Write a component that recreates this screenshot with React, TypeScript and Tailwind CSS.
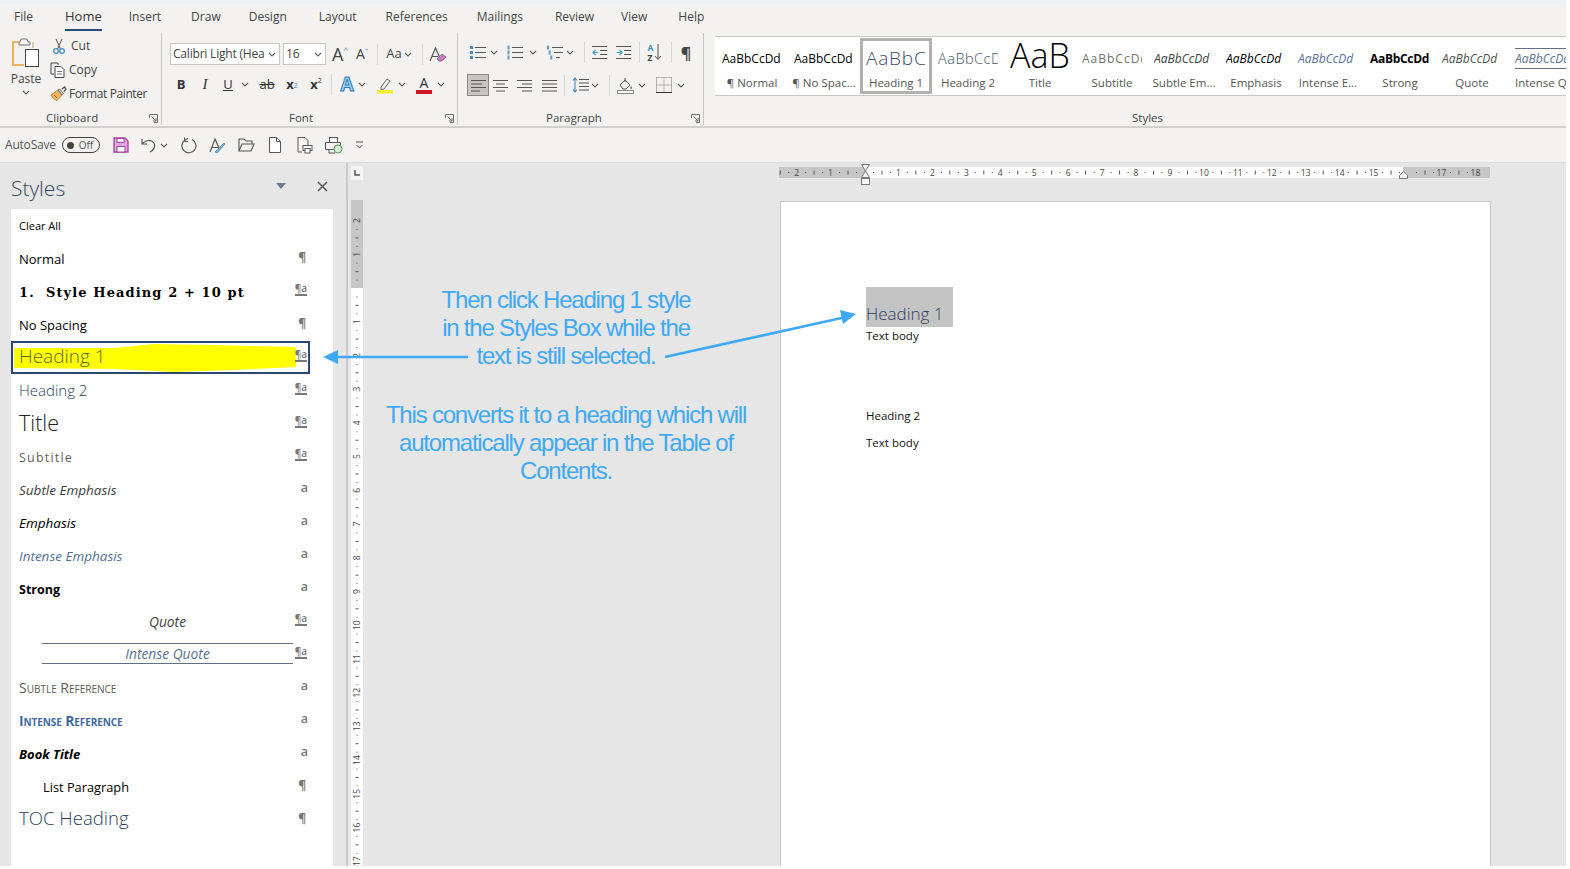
import type { ReactNode } from "react";

const ui = "font-['Open_Sans','Noto_Sans',sans-serif]";
const grayIcon = "#605e5c";
const blue = "#3fa9f5";

const tabs = [
  { label: "Insert", cls: "ml-[27px]" },
  { label: "Draw", cls: "ml-[30px]" },
  { label: "Design", cls: "ml-[28px]" },
  { label: "Layout", cls: "ml-[32px]" },
  { label: "References", cls: "ml-[29px]" },
  { label: "Mailings", cls: "ml-[29px]" },
  { label: "Review", cls: "ml-[32px]" },
  { label: "View", cls: "ml-[27px]" },
  { label: "Help", cls: "ml-[31px]" },
];

function Chevron({ className = "" }: { className?: string }) {
  return (
    <svg width="8" height="5" viewBox="0 0 8 5" className={className}>
      <path d="M1 1l3 3 3-3" fill="none" stroke={grayIcon} strokeWidth="1.1" />
    </svg>
  );
}

function Cell({ className = "", children }: { className?: string; children?: ReactNode }) {
  return <div className={"flex h-[21px] shrink-0 items-center justify-center " + className}>{children}</div>;
}

function Sep({ className = "" }: { className?: string }) {
  return <div className={"h-[21px] w-px shrink-0 bg-[#d8d6d4] " + className} />;
}

function Launcher({ className = "" }: { className?: string }) {
  return (
    <svg width="9" height="9" viewBox="0 0 9 9" className={"absolute top-[81px] " + className}>
      <path d="M.5 4V.5H8.500V8.500H5M2.500 2.500L7 7M7 4V7H4" fill="none" stroke="#707070" strokeWidth="1" />
    </svg>
  );
}

function Lines({ rows, w = 15, x = 0 }: { rows: [number, number][]; w?: number; x?: number }) {
  return (
    <>
      {rows.map(([from, to], i) => (
        <path key={i} d={`M${x + from} ${2.500 + i * 3.500}H${x + Math.min(to, w)}`} stroke="#555" strokeWidth="1" />
      ))}
    </>
  );
}

function Align({ rows }: { rows: [number, number][] }) {
  return (
    <svg width="15" height="15" viewBox="0 0 15 15">
      <Lines rows={rows} />
    </svg>
  );
}

function ListIcon({ kind }: { kind: "bullet" | "number" | "multi" }) {
  return (
    <svg width="17" height="15" viewBox="0 0 17 15">
      {[2, 7, 12].map((y, i) => (
        <path key={y} d={`M${kind === "multi" ? 6 + i * 2 : 6} ${y + 0.500}H${kind === "multi" && i === 2 ? 14 : 17}`} stroke="#555" strokeWidth="1" />
      ))}
      {kind === "bullet" &&
        [0, 5, 10].map((y) => <rect key={y} x="1" y={y + 1} width="3" height="3" fill="#4a8fb8" />)}
      {kind !== "bullet" &&
        [0, 5, 10].map((y) => (
          <rect key={y} x={kind === "multi" ? 1 + y / 3 : 1.500} y={y + 0.500} width="2" height="4" fill="#6a9ab8" />
        ))}
    </svg>
  );
}

function PasteIcon() {
  return (
    <svg width="30" height="32" viewBox="0 0 30 32">
      <path d="M8 5H2v23h11" fill="none" stroke="#e8b55a" strokeWidth="2" />
      <path d="M8 5h1l1-3h6l1 3h2v3H8z" fill="#f5f4f3" stroke="#777" strokeWidth="1" />
      <path d="M22 5v6" stroke="#b8a070" strokeWidth="1" />
      <rect x="14.500" y="12.500" width="13" height="17" fill="#fff" stroke="#444" strokeWidth="1" />
    </svg>
  );
}

function CutIcon() {
  return (
    <svg width="14" height="16" viewBox="0 0 14 16">
      <path d="M4 1l4.500 10M10 1L5.500 11" stroke="#666" strokeWidth="1.100" fill="none" />
      <circle cx="4" cy="13" r="2.300" fill="none" stroke="#3f8fb5" strokeWidth="1.300" />
      <circle cx="10" cy="13" r="2.300" fill="none" stroke="#3f8fb5" strokeWidth="1.300" />
    </svg>
  );
}

function CopyIcon() {
  return (
    <svg width="16" height="16" viewBox="0 0 16 16">
      <path d="M6 1H1v11h3" fill="none" stroke="#444" strokeWidth="1" />
      <path d="M6 1h2v2M5 4.500h6l3 3v8H5z" fill="#fff" stroke="#444" strokeWidth="1" />
      <path d="M7 9.500h5M7 12h5" stroke="#777" strokeWidth="1" />
    </svg>
  );
}

function PainterIcon() {
  return (
    <svg width="17" height="16" viewBox="0 0 17 16">
      <path d="M1 9l7-5 4 5-5 5.500C5 14 2.500 12 1 9z" fill="#eeb45f" stroke="#c98a35" strokeWidth="1" />
      <path d="M8 4l4 5 1.500-1.500-4-4.500z" fill="#dcdcdc" stroke="#666" strokeWidth="1" />
      <path d="M12 3l2.500-2 1.500 2-2 2.500" fill="none" stroke="#555" strokeWidth="1.300" />
      <path d="M4 9l3 3" stroke="#a86f28" strokeWidth="1" />
    </svg>
  );
}

function TextA({ color, size = "text-[15px]" }: { color?: string; size?: string }) {
  return <span className={size + " leading-none"} style={color ? { color } : undefined}>A</span>;
}

function Ribbon() {
  return (
    <div className={"flex h-[96px] shrink-0 text-[#444] " + ui}>
      {/* clipboard */}
      <div className="relative mt-[3px] flex h-[92px] w-[162px] shrink-0 border-r border-[#c8c6c4]">
        <div className="flex w-[50px] flex-col items-center pl-[2px] pt-[4px]">
          <PasteIcon />
          <span className="mt-[2px] text-[12px] leading-[16px]">Paste</span>
          <Chevron className="mt-[3px]" />
        </div>
        <div className="flex flex-col pt-px text-[12px]">
          <div className="flex h-[24px] items-center gap-[5px] pl-[2px]"><CutIcon />Cut</div>
          <div className="flex h-[24px] items-center gap-[3px]"><CopyIcon />Copy</div>
          <div className="flex h-[24px] items-center gap-[2px]"><PainterIcon /><span className="tracking-[-0.4px]">Format Painter</span></div>
        </div>
        <span className="absolute left-[46px] top-[77px] text-[11.500px] leading-[16px]">Clipboard</span>
        <Launcher className="left-[149px]" />
      </div>

      {/* font */}
      <div className="relative mt-[3px] flex h-[92px] w-[296px] shrink-0 flex-col border-r border-[#c8c6c4] pl-[8px] pt-[10px]">
        <div className="flex items-center">
          <div className="flex h-[22px] w-[110px] shrink-0 items-center justify-between whitespace-nowrap border border-[#c8c6c4] bg-white pl-[2px] pr-[3px] text-[12px] tracking-[-0.2px]">
            Calibri Light (Hea<Chevron />
          </div>
          <div className="ml-[3px] flex h-[22px] w-[43px] shrink-0 items-center justify-between border border-[#c8c6c4] bg-white pl-[2px] pr-[3px] text-[12px]">
            16<Chevron />
          </div>
          <Cell className="ml-[3px] w-[22px]"><TextA size="text-[18px]" /><span className="-mt-[8px] text-[8px] text-[#4a8fb8]">^</span></Cell>
          <Cell className="w-[22px]"><TextA size="text-[14px]" /><span className="-mt-[7px] text-[8px] text-[#4a8fb8]">ˇ</span></Cell>
          <Sep className="ml-[4px]" />
          <Cell className="ml-[7px] w-[28px] gap-[2px] text-[13px]">Aa<Chevron /></Cell>
          <Sep className="ml-[9px]" />
          <Cell className="ml-[5px] w-[20px]">
            <svg width="18" height="17" viewBox="0 0 18 17">
              <path d="M1 15L6.500 2l4 9M3 10.500h6" fill="none" stroke="#555" strokeWidth="1.200" />
              <path d="M10 15l-2-2 5-5 4 3-4 4z" fill="#c77bbd" stroke="#8d5a88" strokeWidth=".8" />
            </svg>
          </Cell>
        </div>
        <div className="mt-[9px] flex items-center text-[#333]">
          <Cell className="w-[22px] text-[13px] font-bold">B</Cell>
          <Cell className="ml-[2px] w-[22px] font-['Liberation_Serif',serif] text-[15px] italic">I</Cell>
          <Cell className="ml-[2px] w-[20px] text-[13px] underline">U</Cell>
          <Cell className="ml-[2px] w-[10px]"><Chevron /></Cell>
          <Cell className="ml-[7px] w-[20px] text-[13px] line-through">ab</Cell>
          <Cell className="ml-[5px] w-[20px] text-[13px] font-bold">x<sub className="text-[7px] font-normal text-[#4a8fb8]">2</sub></Cell>
          <Cell className="ml-[4px] w-[20px] text-[13px] font-bold">x<sup className="text-[7px] font-normal">2</sup></Cell>
          <Sep className="ml-[5px]" />
          <Cell className="ml-[6px] w-[18px]">
            <span className="text-[19px] font-bold leading-none text-[#9fd3f0] [-webkit-text-stroke:1px_#2b7cb5]">A</span>
          </Cell>
          <Cell className="ml-px w-[10px]"><Chevron /></Cell>
          <Cell className="ml-[9px] w-[18px]">
            <svg width="18" height="18" viewBox="0 0 18 18">
              <path d="M5 11l6-8 3 2-6 8-3 .5z" fill="none" stroke="#666" strokeWidth="1" />
              <rect x="1" y="14" width="16" height="3.500" fill="#f8ee2e" />
            </svg>
          </Cell>
          <Cell className="ml-[3px] w-[10px]"><Chevron /></Cell>
          <Cell className="ml-[8px] w-[18px] flex-col">
            <span className="text-[14px] leading-[14px]">A</span>
            <span className="h-[4px] w-[16px] bg-[#d2141c]" />
          </Cell>
          <Cell className="ml-[3px] w-[10px]"><Chevron /></Cell>
        </div>
        <span className="absolute left-[127px] top-[77px] text-[11.500px] leading-[16px]">Font</span>
        <Launcher className="left-[283px]" />
      </div>

      {/* paragraph */}
      <div className="relative mt-[3px] flex h-[92px] w-[246px] shrink-0 flex-col border-r border-[#c8c6c4] pl-[8px] pt-[9px]">
        <div className="flex items-center">
          <Cell className="ml-[3px] w-[17px]"><ListIcon kind="bullet" /></Cell>
          <Cell className="ml-[3px] w-[10px]"><Chevron /></Cell>
          <Cell className="ml-[7px] w-[17px]"><ListIcon kind="number" /></Cell>
          <Cell className="ml-[5px] w-[10px]"><Chevron /></Cell>
          <Cell className="ml-[8px] w-[17px]"><ListIcon kind="multi" /></Cell>
          <Cell className="ml-[2px] w-[10px]"><Chevron /></Cell>
          <Sep className="ml-[9px]" />
          <Cell className="ml-[7px] w-[16px]">
            <svg width="16" height="15" viewBox="0 0 16 15">
              <path d="M0 1.500H15M8 5.500H15M8 9.500H15M0 13.500H15" stroke="#555" />
              <path d="M6 7.500H1M3.500 5L1 7.500 3.500 10" fill="none" stroke="#3f9bc7" strokeWidth="1.200" />
            </svg>
          </Cell>
          <Cell className="ml-[8px] w-[16px]">
            <svg width="16" height="15" viewBox="0 0 16 15">
              <path d="M0 1.500H15M8 5.500H15M8 9.500H15M0 13.500H15" stroke="#555" />
              <path d="M1 7.500H6M3.500 5L6 7.500 3.500 10" fill="none" stroke="#3f9bc7" strokeWidth="1.200" />
            </svg>
          </Cell>
          <Sep className="ml-[7px]" />
          <Cell className="ml-[5px] w-[20px] gap-[1px]">
            <span className="flex flex-col gap-px text-[8.500px] font-bold leading-[9px]"><span className="text-[#3f8fb5]">A</span><span>Z</span></span>
            <svg width="8" height="17" viewBox="0 0 8 17"><path d="M4 0V15M1 12l3 3.500L7 12" fill="none" stroke="#555" /></svg>
          </Cell>
          <Sep className="ml-[6px]" />
          <Cell className="ml-[4px] w-[20px] text-[16px] font-bold text-[#444]">¶</Cell>
        </div>
        <div className="mt-[11px] flex items-center">
          <Cell className="ml-px h-[22px] w-[22px] border border-[#8a8886] bg-[#c8c6c4]"><Align rows={[[0, 15], [0, 11], [0, 15], [0, 9]]} /></Cell>
          <Cell className="ml-px w-[21px]"><Align rows={[[0, 15], [3, 12], [0, 15], [3, 12]]} /></Cell>
          <Cell className="ml-[3px] w-[21px]"><Align rows={[[0, 15], [5, 15], [0, 15], [5, 15]]} /></Cell>
          <Cell className="ml-[4px] w-[21px]"><Align rows={[[0, 15], [0, 15], [0, 15], [0, 15]]} /></Cell>
          <Sep className="ml-[4px]" />
          <Cell className="ml-[7px] w-[17px]">
            <svg width="17" height="16" viewBox="0 0 17 16">
              <path d="M3 1V15M1 3.500L3 1l2 2.500M1 12.500L3 15l2-2.500" fill="none" stroke="#3f8fb5" strokeWidth="1.100" />
              <path d="M7 2.500H17M7 6H17M7 9.500H17M7 13H17" stroke="#555" />
            </svg>
          </Cell>
          <Cell className="ml-px w-[10px]"><Chevron /></Cell>
          <Sep className="ml-[9px]" />
          <Cell className="ml-[7px] w-[17px]">
            <svg width="17" height="17" viewBox="0 0 17 17">
              <path d="M3 8l5-5 5 5-4 4H6z" fill="none" stroke="#555" strokeWidth="1" />
              <path d="M8 1v4" stroke="#555" />
              <path d="M14 9c1 1.500 1.500 2.500 0 3-1-.5-.8-1.500 0-3z" fill="#555" />
              <rect x=".5" y="13.500" width="16" height="3" fill="#fff" stroke="#888" />
            </svg>
          </Cell>
          <Cell className="ml-[3px] w-[10px]"><Chevron /></Cell>
          <Cell className="ml-[8px] w-[17px]">
            <svg width="16" height="16" viewBox="0 0 16 16">
              <path d="M.5.5H15.500M.5 8H15.500M8 .5V15.500M.5.5V15.500M15.500.5V15.500" fill="none" stroke="#777" strokeDasharray="1 1" />
              <path d="M0 15.500H16" stroke="#333" />
            </svg>
          </Cell>
          <Cell className="ml-[4px] w-[10px]"><Chevron /></Cell>
        </div>
        <span className="absolute left-[88px] top-[77px] text-[11.500px] leading-[16px]">Paragraph</span>
        <Launcher className="left-[233px]" />
      </div>

      <StyleGallery />
    </div>
  );
}

const gallery: { preview: string; label: string; cls: string }[] = [
  { preview: "AaBbCcDd", label: "¶ Normal", cls: "text-[12px] text-black" },
  { preview: "AaBbCcDd", label: "¶ No Spac...", cls: "text-[12px] text-black" },
  { preview: "AaBbCc", label: "Heading 1", cls: "text-[19px] font-light tracking-[0.8px] text-[#3b4c66]" },
  { preview: "AaBbCcDd", label: "Heading 2", cls: "text-[14.500px] font-light tracking-[0.5px] text-[#44546a]" },
  { preview: "AaB", label: "Title", cls: "-mt-[8px] block text-[34px] font-light leading-none text-black" },
  { preview: "AaBbCcDd", label: "Subtitle", cls: "text-[12px] tracking-[1px] text-[#707070]" },
  { preview: "AaBbCcDd", label: "Subtle Em...", cls: "text-[12px] italic text-[#404040]" },
  { preview: "AaBbCcDd", label: "Emphasis", cls: "text-[12px] italic text-black" },
  { preview: "AaBbCcDd", label: "Intense E...", cls: "text-[12px] italic text-[#5a7398]" },
  { preview: "AaBbCcDd", label: "Strong", cls: "text-[12px] font-bold tracking-[-0.3px] text-black" },
  { preview: "AaBbCcDd", label: "Quote", cls: "text-[12px] italic text-[#505050]" },
];

function StyleGallery() {
  return (
    <div className="relative ml-[11px] mt-[6px] h-[90px] flex-1">
      <div className="flex h-[60px] overflow-hidden border-y border-[#c8c6c4] bg-white pl-px">
        {gallery.map((g) => (
          <div key={g.label} className="relative flex h-full w-[72px] shrink-0 flex-col px-[6px]">
            <div className="mt-[4px] flex h-[29px] w-[60px] items-center overflow-hidden whitespace-nowrap pt-[6px]">
              <span className={g.cls}>{g.preview}</span>
            </div>
            <span className="mt-[5px] self-center whitespace-nowrap text-[11.500px] leading-[16px] text-[#555]">{g.label}</span>
            {g.label === "Heading 1" && <span className="absolute inset-x-0 inset-y-px border-[3px] border-[#b3b1af]" />}
          </div>
        ))}
        <div className="flex h-full w-[62px] shrink-0 flex-col items-start overflow-hidden pl-[7px]">
          <div className="mt-[11px] flex h-[21px] w-[52px] items-center overflow-hidden whitespace-nowrap border-y border-[#5f6f87] text-[12px] italic text-[#5a7398]">AaBbCcDd</div>
          <span className="mt-[6px] whitespace-nowrap text-[11.500px] leading-[16px] text-[#555]">Intense Q.</span>
        </div>
      </div>
      <span className="absolute left-[417px] top-[74px] text-[11.500px] leading-[16px] text-[#444]">Styles</span>
    </div>
  );
}

function QuickAccess() {
  return (
    <div className={"flex h-[36px] shrink-0 items-center border-t-2 border-[#d2d0ce] text-[#555] " + ui}>
      <span className="ml-[5px] text-[12px] tracking-[-0.2px]">AutoSave</span>
      <div className="ml-[6px] flex h-[16px] w-[38px] items-center rounded-full border border-[#444] pl-[4px] text-[10px]">
        <span className="h-[7px] w-[7px] rounded-full bg-[#444]" />
        <span className="ml-[5px]">Off</span>
      </div>
      <svg width="16" height="16" viewBox="0 0 16 16" className="ml-[13px]">
        <path d="M1 1h11l3 3v11H1z" fill="#e9a6e6" stroke="#a0459c" strokeWidth="1.300" />
        <rect x="4" y="1.500" width="7" height="4" fill="#fff" stroke="#a0459c" />
        <rect x="4" y="9.500" width="8" height="5.500" fill="#fff" stroke="#a0459c" />
      </svg>
      <svg width="16" height="16" viewBox="0 0 16 16" className="ml-[12px]">
        <path d="M1 2v5h5M1 7c3-4 9-5 12-1 2 3 0 7-4 9" fill="none" stroke="#555" strokeWidth="1.200" />
      </svg>
      <Chevron className="ml-[3px]" />
      <svg width="17" height="17" viewBox="0 0 17 17" className="ml-[12px]">
        <path d="M8 1.500l-3 1.500M5 3a7 7 0 1 0 7-.5" fill="none" stroke="#555" strokeWidth="1.200" />
        <path d="M4.500 .5v4h3.500" fill="none" stroke="#555" strokeWidth="1" />
      </svg>
      <svg width="17" height="17" viewBox="0 0 17 17" className="ml-[12px]">
        <path d="M1 15L6 2l4 9M3 10.500h6" fill="none" stroke="#555" strokeWidth="1.200" />
        <path d="M6 15l9-9 1 1-8 9z" fill="#7fb2d8" stroke="#4a7ea8" strokeWidth=".8" />
      </svg>
      <svg width="17" height="14" viewBox="0 0 17 14" className="ml-[12px]">
        <path d="M1 13V1h5l2 2h6v3M1 13l3-7h12l-3 7z" fill="none" stroke="#555" strokeWidth="1.100" />
      </svg>
      <svg width="12" height="16" viewBox="0 0 12 16" className="ml-[14px]">
        <path d="M.5.5h7l4 4v11H.5zM7.500.5v4h4" fill="#fff" stroke="#555" />
      </svg>
      <svg width="16" height="17" viewBox="0 0 16 17" className="ml-[16px]">
        <path d="M1 .5h7l3 3V8M1 .5V15h4" fill="none" stroke="#555" />
        <rect x="6" y="8.500" width="9" height="5" fill="#fff" stroke="#555" />
        <rect x="8" y="11.500" width="5" height="4.500" fill="#fff" stroke="#555" />
      </svg>
      <svg width="18" height="17" viewBox="0 0 18 17" className="ml-[12px]">
        <rect x="4.500" y=".5" width="8" height="5" fill="#fff" stroke="#555" />
        <path d="M.5 5.500h15v7H.5zM4 12.500V16h6" fill="none" stroke="#555" />
        <circle cx="13" cy="12" r="4" fill="#d4ecd4" stroke="#5a9a5a" />
      </svg>
      <svg width="9" height="9" viewBox="0 0 9 9" className="ml-[12px]">
        <path d="M1 1h7M1.500 4l3 3 3-3" fill="none" stroke="#555" />
      </svg>
    </div>
  );
}

function HorizontalRuler() {
  const zero = 85.5;
  const cm = 33.94;
  const marks: number[] = [];
  for (let i = -3; i <= 18; i++) marks.push(i);
  return (
    <svg width="712" height="23" viewBox="0 0 712 23" className="ml-[415px] block shrink-0">
      <rect x="0" y="4" width="711" height="11" fill="#c6c6c6" />
      <rect x="86" y="4" width="538" height="11" fill="#fff" />
      {marks.map((n) => {
        const x = zero + n * cm;
        return (
          <g key={n}>
            {n !== 0 && n !== 16 && n !== -3 && (
              <text x={x} y="12.500" fontSize="8.500" textAnchor="middle" fill="#444" fontFamily="Open Sans">
                {Math.abs(n)}
              </text>
            )}
            {n < 18 && (
              <>
                {x + cm * 0.25 > 0 && <rect x={x + cm * 0.25} y="9" width="1" height="1" fill="#555" />}
                {x + cm * 0.5 > 0 && <rect x={x + cm * 0.5} y="7.500" width="1" height="4" fill="#555" />}
                <rect x={x + cm * 0.75} y="9" width="1" height="1" fill="#555" />
              </>
            )}
          </g>
        );
      })}
      <path d="M82.500 1.500h8l-4 6.500 4 6.500h-8l4-6.500z" fill="#f5f5f5" stroke="#777" />
      <rect x="82.500" y="15.500" width="8" height="6" fill="#f5f5f5" stroke="#777" />
      <path d="M620.500 15.500v-3l4-4 4 4v3z" fill="#f5f5f5" stroke="#777" />
    </svg>
  );
}

function VerticalRuler() {
  const zero = 88;
  const cm = 33.72;
  const marks: number[] = [];
  for (let i = -2; i <= 17; i++) marks.push(i);
  return (
    <svg width="12" height="665" viewBox="0 0 12 665" className="mt-[20px] block">
      <rect x="0" y="0" width="12" height="88" fill="#c6c6c6" />
      <rect x="0" y="88" width="12" height="577" fill="#fff" />
      {marks.map((n) => {
        const y = zero + n * cm;
        return (
          <g key={n}>
            {n !== 0 && (
              <text
                x="6"
                y={y}
                fontSize="8.500"
                textAnchor="middle"
                dominantBaseline="central"
                fill="#444"
                fontFamily="Open Sans"
                transform={`rotate(-90 6 ${y})`}
              >
                {Math.abs(n)}
              </text>
            )}
            <rect x="5.500" y={y + cm * 0.25} width="1" height="1" fill="#555" />
            <rect x="4.500" y={y + cm * 0.5} width="3" height="1" fill="#555" />
            <rect x="5.500" y={y + cm * 0.75} width="1" height="1" fill="#555" />
          </g>
        );
      })}
    </svg>
  );
}

function Mark({ kind }: { kind: "para" | "linked" | "char" }) {
  if (kind === "para") return <span className="mr-[2px] text-[12px] font-bold leading-none text-[#777]">¶</span>;
  if (kind === "linked")
    return <span className="-mt-[2px] mr-px border-b-2 border-[#777] text-[10px] font-semibold leading-[11px] text-[#777]">¶a</span>;
  return <span className="text-[12.500px] font-semibold leading-none text-[#777]">a</span>;
}

const styleRows: { label: string; kind?: "para" | "linked" | "char"; cls: string; box?: string }[] = [
  { label: "Clear All", cls: "text-[11px] text-black", box: "pb-[2px]" },
  { label: "Normal", kind: "para", cls: "text-[13px] text-black" },
  { label: "1.  Style Heading 2 + 10 pt", kind: "linked", cls: "whitespace-pre font-['DejaVu_Serif','Liberation_Serif',serif] text-[13px] font-bold tracking-[1.100px] text-black" },
  { label: "No Spacing", kind: "para", cls: "text-[13px] text-black" },
  { label: "Heading 1", kind: "linked", cls: "text-[19px] font-light text-[#5e6a32]", box: "pt-px" },
  { label: "Heading 2", kind: "linked", cls: "text-[15px] font-light text-[#2c3e5c]" },
  { label: "Title", kind: "linked", cls: "text-[21.500px] font-light text-[#222]", box: "pt-[3px]" },
  { label: "Subtitle", kind: "linked", cls: "text-[12.500px] tracking-[1.200px] text-[#5f5f5f]" },
  { label: "Subtle Emphasis", kind: "char", cls: "text-[13.500px] italic text-[#404040]" },
  { label: "Emphasis", kind: "char", cls: "text-[13.500px] italic text-black" },
  { label: "Intense Emphasis", kind: "char", cls: "text-[13.500px] italic text-[#566f92]" },
  { label: "Strong", kind: "char", cls: "text-[12.500px] font-bold text-black" },
  { label: "Quote", kind: "linked", cls: "text-[13.800px] italic text-[#404040]", box: "ml-[23px] w-[251px] text-center" },
  { label: "Intense Quote", kind: "linked", cls: "text-[13.800px] italic text-[#566f92]", box: "ml-[23px] h-[21px] w-[251px] border-y border-[#5f7186] text-center leading-[18px]" },
  { label: "Subtle Reference", kind: "char", cls: "text-[14px] text-[#5a5a5a] [font-variant:small-caps]" },
  { label: "Intense Reference", kind: "char", cls: "text-[14px] font-bold tracking-[-0.1px] text-[#41699e] [font-variant:small-caps]" },
  { label: "Book Title", kind: "char", cls: "text-[13px] font-bold italic text-black" },
  { label: "List Paragraph", kind: "para", cls: "text-[12.800px] text-black", box: "ml-[24px]" },
  { label: "TOC Heading", kind: "para", cls: "text-[18.600px] font-light text-[#2c3e5c]" },
];

function StylesPane() {
  return (
    <div className={"flex h-full w-[348px] shrink-0 flex-col border-r-2 border-[#c9c9c9] " + ui}>
      <div className="flex h-[46px] shrink-0 items-center pl-[11px]">
        <span className="pt-[6px] text-[21px] font-light text-[#34465e]">Styles</span>
        <svg width="10" height="6" viewBox="0 0 10 6" className="ml-[211px]"><path d="M0 0h10L5 6z" fill="#6f7a88" /></svg>
        <svg width="11" height="11" viewBox="0 0 11 11" className="ml-[31px]"><path d="M1 1l9 9M10 1l-9 9" stroke="#555" strokeWidth="1.500" /></svg>
      </div>
      <div className="ml-[11px] w-[322px] flex-1 bg-white">
        {styleRows.map((r) => (
          <div key={r.label} className="relative flex h-[33px] w-[299px] items-center justify-between pb-[2px] pl-[8px] pr-[2px]">
            {r.label === "Heading 1" && (
              <>
                <svg viewBox="0 0 282 29" preserveAspectRatio="none" className="absolute left-[3px] top-[2px] h-[29px] w-[282px]">
                  <path d="M0 5L100 5L140 1L200 2L282 4L282 24L220 27L160 29L100 26L0 25z" fill="#ffff00" />
                </svg>
                <span className="absolute inset-0 border-2 border-[#2c4770]" />
              </>
            )}
            <div className={"relative min-w-0 " + (r.box ?? "")}>
              <span className={"leading-none " + r.cls}>{r.label}</span>
            </div>
            {r.kind && <div className="relative flex shrink-0"><Mark kind={r.kind} /></div>}
          </div>
        ))}
      </div>
    </div>
  );
}

function DocPage() {
  return (
    <div className={"ml-[416px] mt-[15px] w-[711px] flex-1 border-x border-t border-[#c8c6c4] bg-white pl-[85px] pt-[85px] text-[11.500px] text-[#111] " + ui}>
      <div className="flex h-[40px] w-[87px] items-end bg-[#c4c4c4] text-[17px] font-light leading-[26px] text-[#2c3e5c]">Heading 1</div>
      <p className="mt-px h-[16px] leading-[16px]">Text body</p>
      <p className="mt-[64px] h-[16px] leading-[16px]">Heading 2</p>
      <p className="mt-[11px] h-[16px] leading-[16px]">Text body</p>
    </div>
  );
}

function Annotations() {
  return (
    <>
      <div className="absolute left-[346px] top-[123px] w-[440px] text-center font-['Liberation_Sans',sans-serif] text-[24px] leading-[28.200px] tracking-[-1.200px] text-[#3fa9f5]">
        <p>Then click Heading 1 style</p>
        <p>in the Styles Box while the</p>
        <p>text is still selected.</p>
      </div>
      <div className="absolute left-[346px] top-[238px] w-[440px] text-center font-['Liberation_Sans',sans-serif] text-[24px] leading-[28.200px] tracking-[-1.200px] text-[#3fa9f5]">
        <p>This converts it to a heading which will</p>
        <p>automatically appear in the Table of</p>
        <p>Contents.</p>
      </div>
      <svg width="160" height="14" viewBox="0 0 160 14" className="absolute left-[322px] top-[187px]">
        <path d="M146 7H14" stroke={blue} strokeWidth="2.500" />
        <path d="M1 7l15-7v14z" fill={blue} />
      </svg>
      <svg width="200" height="56" viewBox="0 0 200 56" className="absolute left-[661px] top-[142px]">
        <path d="M4 52L185 12" stroke={blue} strokeWidth="2.800" />
        <path d="M195 9L179 5l3 14z" fill={blue} />
      </svg>
    </>
  );
}

export default function App() {
  return (
    <div className="h-[866px] w-[1566px] overflow-hidden">
      <div className="flex h-full flex-col">
        <div className="h-[4px] shrink-0 bg-[#eaf1f9]" />
        <div className="flex shrink-0 flex-col bg-[#f3f2f1]">
          <div className={"flex h-[26px] shrink-0 items-center pl-[14px] text-[12px] text-[#444] " + ui}>
            <span>File</span>
            <span className="relative ml-[32px] text-[13px] font-medium text-[#333]">
              Home
              <span className="absolute -bottom-[4px] left-0 h-[2px] w-full bg-[#2b4a7a]" />
            </span>
            {tabs.map((t) => (
              <span key={t.label} className={t.cls}>{t.label}</span>
            ))}
          </div>
          <Ribbon />
          <QuickAccess />
        </div>
        <div className="relative flex min-h-0 flex-1 border-t border-[#dcdcdc] bg-[#e6e6e6]">
          <StylesPane />
          <div className="ml-[3px] flex w-[13px] shrink-0 flex-col">
            <div className="mt-[3px] flex h-[14px] w-[12px] shrink-0 items-center justify-center bg-[#f4f4f4]">
              <svg width="6" height="6" viewBox="0 0 6 6"><path d="M1 0v5h5" fill="none" stroke="#555" strokeWidth="1.500" /></svg>
            </div>
            <VerticalRuler />
          </div>
          <div className="flex min-w-0 flex-1 flex-col">
            <HorizontalRuler />
            <DocPage />
          </div>
          <Annotations />
        </div>
      </div>
    </div>
  );
}
